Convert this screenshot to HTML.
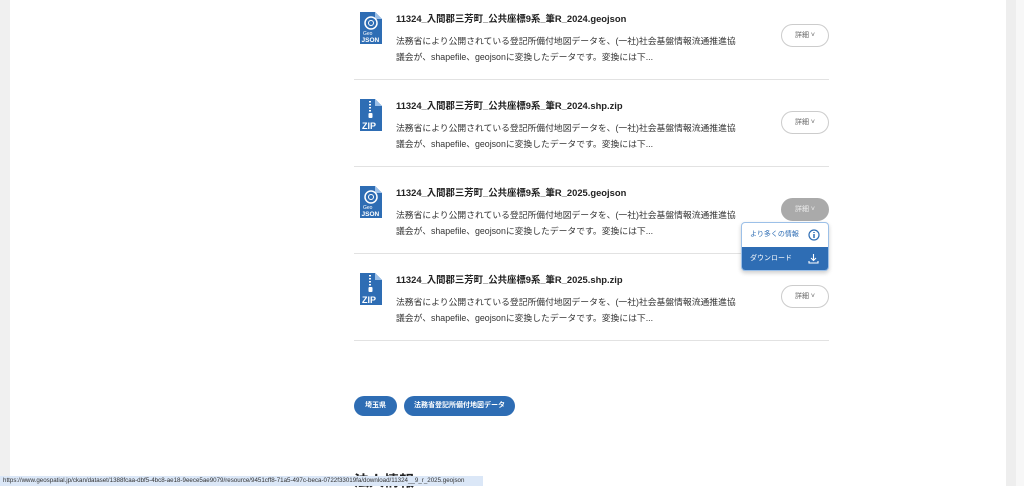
<!DOCTYPE html>
<html><head><meta charset="utf-8"><style>
*{margin:0;padding:0;box-sizing:border-box}
body{width:1024px;height:486px;overflow:hidden;background:#fff;font-family:"Liberation Sans","Noto Sans CJK JP",sans-serif;position:relative;color:#222}
.lg{position:absolute;left:0;top:0;width:10px;height:486px;background:#f0f0f0}
.rg{position:absolute;left:1006px;top:0;width:10px;height:486px;background:#eeeeee}
.sb{position:absolute;left:1016px;top:0;width:8px;height:486px;background:#f7f7f7}
.th{position:absolute;left:1018px;top:203px;width:5px;height:119px;background:#8a8a8a;border-radius:3px}
.row{position:absolute;left:354px;width:475px;height:87px;border-bottom:1px solid #e2e2e2}
.ic{position:absolute;left:6px;top:19px;width:22px;height:32px}
.t{position:absolute;left:42px;top:18px;font-size:9.4px;font-weight:bold;color:#222;white-space:nowrap}
.d{position:absolute;left:42px;top:40px;font-size:8.8px;line-height:16px;color:#333;width:345px}
.b{position:absolute;left:427px;top:31px;width:48px;height:23px;border:1px solid #ccc;border-radius:12px;font-size:7px;color:#666;text-align:center;line-height:21px}
.tag{position:absolute;top:396px;height:20px;background:#2e6db4;color:#fff;font-size:7px;font-weight:bold;border-radius:10px;text-align:center;line-height:20px}
</style></head><body>
<div class="lg"></div><div class="rg"></div><div class="sb"><div class="th"></div></div>
<svg width="0" height="0" style="position:absolute"><defs>
<g id="geo"><path d="M0 0H15L22 7V32H0Z" fill="#2e6db4"/><path d="M15 0V7H22Z" fill="#9cc0e8"/><circle cx="11" cy="11" r="6" fill="none" stroke="#fff" stroke-width="1.5"/><circle cx="11" cy="11" r="2.5" fill="none" stroke="#fff" stroke-width="1"/><text x="3" y="23" font-size="5" fill="#fff" font-family="Liberation Sans">Geo</text><text x="1.5" y="30" font-size="6.5" font-weight="bold" fill="#fff" font-family="Liberation Sans">JSON</text></g>
<g id="zip"><path d="M0 0H15L22 7V32H0Z" fill="#2e6db4"/><path d="M15 0V7H22Z" fill="#9cc0e8"/><path d="M10 2V14" stroke="#fff" stroke-width="2" stroke-dasharray="1.5 1.5"/><rect x="8.5" y="14" width="4" height="5" rx="1" fill="#fff"/><text x="2" y="30" font-size="9" font-weight="bold" fill="#fff" font-family="Liberation Sans">ZIP</text></g>
</defs></svg>
<div class="row" style="top:-7px"><svg class="ic" viewBox="0 0 22 32"><use href="#geo"/></svg><div class="t">11324_入間郡三芳町_公共座標9系_筆R_2024.geojson</div><div class="d">法務省により公開されている登記所備付地図データを、(一社)社会基盤情報流通推進協議会が、shapefile、geojsonに変換したデータです。変換には下...</div><div class="b">詳細 ˅</div></div>
<div class="row" style="top:80px"><svg class="ic" viewBox="0 0 22 32"><use href="#zip"/></svg><div class="t">11324_入間郡三芳町_公共座標9系_筆R_2024.shp.zip</div><div class="d">法務省により公開されている登記所備付地図データを、(一社)社会基盤情報流通推進協議会が、shapefile、geojsonに変換したデータです。変換には下...</div><div class="b">詳細 ˅</div></div>
<div class="row" style="top:167px"><svg class="ic" viewBox="0 0 22 32"><use href="#geo"/></svg><div class="t">11324_入間郡三芳町_公共座標9系_筆R_2025.geojson</div><div class="d">法務省により公開されている登記所備付地図データを、(一社)社会基盤情報流通推進協議会が、shapefile、geojsonに変換したデータです。変換には下...</div><div class="b" style="background:#aaa;border-color:#aaa;color:#eee">詳細 ˅</div></div>
<div class="row" style="top:254px"><svg class="ic" viewBox="0 0 22 32"><use href="#zip"/></svg><div class="t">11324_入間郡三芳町_公共座標9系_筆R_2025.shp.zip</div><div class="d">法務省により公開されている登記所備付地図データを、(一社)社会基盤情報流通推進協議会が、shapefile、geojsonに変換したデータです。変換には下...</div><div class="b">詳細 ˅</div></div>
<div style="position:absolute;left:741px;top:222px;width:88px;height:49px;border:1px solid #9cc0e8;border-radius:4px;overflow:hidden;box-shadow:0 2px 4px rgba(0,0,0,.2);background:#fff">
<div style="height:24px;font-size:7px;color:#2e6db4;padding-left:8px;line-height:24px;position:relative">より多くの情報<svg style="position:absolute;right:8px;top:6px" width="12" height="12" viewBox="0 0 12 12"><circle cx="6" cy="6" r="5" fill="none" stroke="#2e6db4" stroke-width="1.2"/><path d="M6 5V9M6 3V4" stroke="#2e6db4" stroke-width="1.5"/></svg></div>
<div style="height:24px;font-size:7px;color:#fff;background:#2e6db4;padding-left:8px;line-height:24px;position:relative">ダウンロード<svg style="position:absolute;right:9px;top:6px" width="11" height="11" viewBox="0 0 11 11"><path d="M5.5 1V7M3 5L5.5 7.5L8 5M1 8V10H10V8" fill="none" stroke="#fff" stroke-width="1.1"/></svg></div></div>
<div class="tag" style="left:354px;width:43px">埼玉県</div>
<div class="tag" style="left:404px;width:111px">法務省登記所備付地図データ</div>
<div style="position:absolute;left:354px;top:470px;font-size:15px;font-weight:bold;color:#222">法人情報</div>
<div style="position:absolute;left:0;top:476px;width:483px;height:10px;background:#dbe7f7;font-size:6.2px;line-height:10px;padding-left:3px;color:#333;white-space:nowrap;overflow:hidden">https://www.geospatial.jp/ckan/dataset/1388fcaa-dbf5-4bc8-ae18-9eece5ae9079/resource/9451cff8-71a5-497c-beca-0722f33019fa/download/11324__9_r_2025.geojson</div>
</body></html>
